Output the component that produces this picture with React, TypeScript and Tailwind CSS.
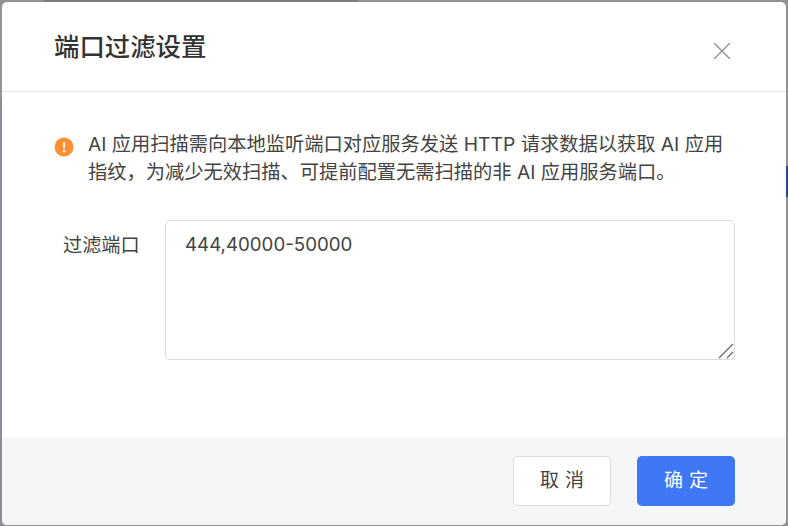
import { X } from "lucide-react";

const font = "font-['Inter','Noto_Sans_CJK_SC',sans-serif]";

function AlertIcon() {
  return (
    <svg width="20" height="20" viewBox="0 0 20 20" className="mt-[7px] shrink-0">
      <circle cx="10" cy="10" r="9.5" fill="#ff8f33" />
      <path d="M8.9 5.2h2.2l-.4 6.6H9.3z" fill="#fff" />
      <circle cx="10" cy="14.2" r="1.25" fill="#fff" />
    </svg>
  );
}

export default function App() {
  return (
    <div className={`relative h-[526px] w-[788px] overflow-hidden bg-[#939394] pb-px pl-[2px] pr-[2px] pt-[2px] ${font}`}>
      {/* bits of the page behind the overlay */}
      <div className="absolute left-[44px] top-0 h-[2px] w-[314px] bg-[#7b7b7b]" />
      <div className="absolute bottom-0 left-0 top-[100px] w-[2px] bg-[#8a8d96]" />
      <div className="absolute right-0 top-[166px] h-[31px] w-[2px] bg-[#2a4a96]" />
      <div className="relative flex h-full flex-col overflow-hidden rounded-[5px] bg-white">
        <header className="flex h-[90px] shrink-0 items-center justify-between border-b border-[#e5e6eb] pl-[52px] pr-[49px]">
          <h2 className="text-[25.4px] font-medium leading-[32px] text-[#333]">端口过滤设置</h2>
          <X size={30} strokeWidth={1.2} className="mt-[8px] text-[#999]" />
        </header>
        <div className="flex-1 pl-[52px] pr-[51px] pt-[38px]">
          <div className="flex gap-[14px] text-[19.25px] leading-[28px] text-[#444]">
            <AlertIcon />
            <p className="whitespace-nowrap">
              AI 应用扫描需向本地监听端口对应服务发送 HTTP 请求数据以获取 AI 应用
              <br />
              指纹，为减少无效扫描、可提前配置无需扫描的非 AI 应用服务端口。
            </p>
          </div>
          <div className="mt-[34px] flex">
            <label className="w-[111px] pl-[9px] pt-[11px] text-[19.2px] leading-[28px] text-[#444]">过滤端口</label>
            <div className="relative h-[140px] w-[570px]">
              <textarea
                readOnly
                value="444,40000-50000"
                className="block h-full w-full resize-none rounded-[5px] border border-[#dcdcdc] px-[19px] py-[10px] text-[18.7px] leading-[28px] text-[#444] outline-none"
              />
              <svg width="16" height="16" viewBox="0 0 16 16" className="absolute bottom-[1px] right-[1px]">
                <path d="M1 15 15 1M9 15l6-6" stroke="#666" strokeWidth="1.2" fill="none" />
              </svg>
            </div>
          </div>
        </div>
        <footer className="flex h-[88px] shrink-0 items-center justify-end gap-[26px] bg-[#f5f6f8] pr-[51px]">
          <button className="h-[50px] w-[98px] rounded-[5px] border border-[#dcdcdc] bg-white pl-[6px] text-[19px] tracking-[6px] text-[#444]">取消</button>
          <button className="h-[50px] w-[98px] rounded-[5px] bg-[#3f77f6] pl-[6px] text-[19px] tracking-[6px] text-white">确定</button>
        </footer>
      </div>
    </div>
  );
}
